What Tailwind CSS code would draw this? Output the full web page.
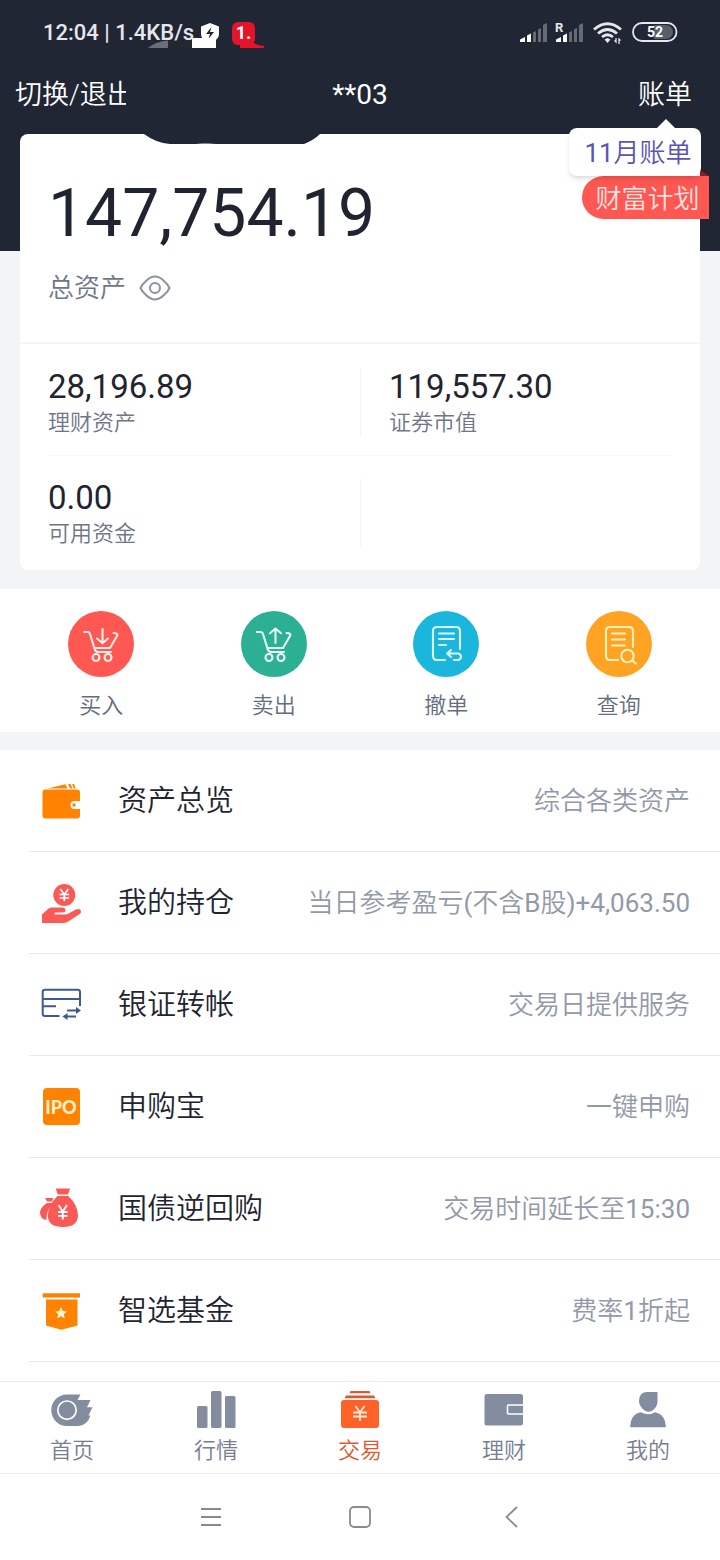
<!DOCTYPE html>
<html lang="zh-CN">
<head>
<meta charset="utf-8">
<meta name="viewport" content="width=device-width, initial-scale=1">
<title>交易</title>
<script src="https://cdn.jsdelivr.net/npm/@tailwindcss/browser@4"></script>
</head>
<body class="flex min-h-screen flex-col bg-white font-['Roboto','Noto_Sans_CJK_SC',sans-serif] font-normal text-[#1f2430]">

<div class="relative bg-[#f3f4f6] pb-[19px]">
  <header class="bg-[#212634] pb-[117px] text-white">
    <div class="relative flex h-[66px] items-center justify-between pr-[42px] pl-[43px]">
      <div class="flex items-center text-[#e6e7ea]">
        <span class="w-[150px] text-[22px] leading-8 font-medium whitespace-nowrap">12:04 | 1.4KB/s</span>
        <svg class="ml-2 h-5 w-[18px]" viewBox="0 0 18 20" aria-hidden="true"><path d="M9 0 18 3.500V11q0 6-9 9Q0 17 0 11V3.500Z" fill="#fff"/><path d="M10.500 4 5 11h4l-1.500 5L13 9H9Z" fill="#212634"/></svg>
        <span class="ml-[13px] flex h-[23px] w-[23px] items-center justify-center rounded-md bg-[#e5142b] text-[18px] leading-5 font-bold text-white">1.</span>
      </div>
      <svg class="absolute top-[38px] left-[148px] h-[10px] w-[116px]" viewBox="0 0 116 10" aria-hidden="true"><path d="M0 10Q8 3 20 2.500V10Z" fill="#6b6e78"/><path d="M20 2.500h24V10H20Z" fill="#25272e"/><path d="M44 0h24v10H44Z" fill="#fff"/><path d="M92 2h10q4 5 14 6v2H92Z" fill="#e5142b"/></svg>
      <svg class="h-6 w-[158px]" viewBox="0 0 158 24" aria-hidden="true">
        <g fill="#fff"><path d="M0 18.500 5 16v5H0ZM7 14.500l4-2V21H7Z"/><path d="M36 18.500 41 16v5h-5ZM43 14.500l4-2V21h-4Z"/></g>
        <g fill="#666a75"><path d="m13 11.500 3-1.500v11h-3ZM18 8.500 21 7v14h-3ZM23 4 27 2v19h-4ZM49 11.500l3-1.500v11h-3ZM54 8.500 57 7v14h-3ZM59 4 63 2v19h-4Z"/></g>
        <text x="35" y="11" font-family="Roboto" font-size="13" font-weight="700" fill="#e6e7ea">R</text>
        <g fill="none" stroke="#e6e7ea" stroke-width="2.800"><path d="M74 8.500Q87.500-3 101 8.500"/><path d="M78 12.500q9.500-8 19 0"/><path d="M82 16q5.500-4.500 11 0"/></g>
        <path d="m84.500 18.500 3-1.500 3 1.500-3 3.500Z" fill="#e6e7ea"/>
        <path d="M96 17v4l-1.500-1.500M99 23v-5l1.500 1.500" stroke="#e6e7ea" stroke-width="1.300" fill="none"/>
        <rect x="113" y="2" width="43.500" height="18" rx="9" fill="none" stroke="#e6e7ea" stroke-width="1.800"/>
        <path d="M134 4h12a7 7 0 0 1 0 14h-12Z" fill="#595e6b"/>
        <text x="135" y="16" font-family="Roboto" font-size="14" font-weight="700" fill="#fff" text-anchor="middle">52</text>
      </svg>
    </div>
    <div class="grid h-[68px] grid-cols-3 items-center px-[15px] pb-[10px] text-[27px] leading-9">
      <button type="button" class="relative justify-self-start font-[350] whitespace-nowrap">切换/退出<span class="absolute inset-y-0 left-[111px] w-3 bg-[#212634]"></span></button>
      <h1 class="text-center text-[28px]">**03</h1>
      <button type="button" class="pr-[13px] text-right font-[350]">账单</button>
    </div>
  </header>

  <main class="mx-5 -mt-[117px] rounded-lg bg-white">
    <section class="border-b-2 border-[#f3f4f6] px-7 pt-10 pb-[36px]">
      <div class="text-[66px] leading-[80px]">147,754.19</div>
      <div class="mt-4 flex items-center gap-[13px] text-[#6e7687]">
        <span class="text-[26px] leading-9 font-[350]">总资产</span>
        <button type="button" aria-label="显示或隐藏资产"><svg class="h-[26px] w-8" viewBox="0 0 32 26" fill="none" stroke="#8b91a0" stroke-width="2" aria-hidden="true"><path d="M1.500 13Q3 9.500 7 6q9-9 18 0 4 3.500 5.500 7-1.500 3.500-5.500 7-9 9-18 0-4-3.500-5.500-7Z"/><circle cx="16" cy="13" r="5"/></svg></button>
      </div>
    </section>
    <section class="px-7">
      <div class="grid grid-cols-2 border-b border-[#f5f6f8] pt-6 pb-[19px]">
        <div class="h-[68px]"><div class="-mt-[3px] text-[33px] leading-[44px]">28,196.89</div><div class="text-[22px] leading-7 font-[350] text-[#6e7687]">理财资产</div></div>
        <div class="h-[68px] border-l border-[#f3f4f6] pl-7"><div class="-mt-[3px] text-[33px] leading-[44px]">119,557.30</div><div class="text-[22px] leading-7 font-[350] text-[#6e7687]">证券市值</div></div>
      </div>
      <div class="grid grid-cols-2 pt-[23px] pb-[23px]">
        <div class="h-[68px]"><div class="-mt-[3px] text-[33px] leading-[44px]">0.00</div><div class="text-[22px] leading-7 font-[350] text-[#6e7687]">可用资金</div></div>
        <div class="h-[68px] border-l border-[#f3f4f6]"></div>
      </div>
    </section>
  </main>

  <!-- dark curve that dips over the card's top edge -->
  <svg class="absolute top-[134px] left-[144px] h-[10px] w-[176px]" viewBox="0 0 176 10" aria-hidden="true"><path d="M0 0q12 9 26 10h134q10-4 16-10Z" fill="#212634"/><path d="M52 10q8-2 20 0Z" fill="#8b8e96"/></svg>

  <button type="button" class="absolute top-[176px] right-[11px] h-[43px] w-[127px] rounded-l-full bg-[#ff5751] pl-1 text-[26px] leading-[46px] font-[350] text-[#ffe4e0]">财富计划</button>
  <svg class="absolute top-[170px] right-[11px] h-[6px] w-[9px]" viewBox="0 0 9 6" aria-hidden="true"><path d="M0 0 9 6H0Z" fill="#8e1d22"/></svg>
  <a href="#bill" class="absolute top-[128px] right-[19px] h-12 w-[132px] rounded-lg bg-white pl-[6px] text-center text-[26px] leading-[50px] font-[350] text-[#5b54b0] shadow-md"><span class="font-normal">11</span>月账单<svg class="absolute -top-[9px] left-[87px] h-[10px] w-5" viewBox="0 0 20 10" aria-hidden="true"><path d="M0 10 10 0l10 10Z" fill="#fff"/></svg></a>
</div>

<nav class="grid grid-cols-4 bg-white px-[15px] pt-[22px] pb-[10px] text-[22px] leading-8 font-[350] text-[#636c80]" aria-label="交易操作">
  <button type="button" class="flex flex-col items-center gap-[13px]"><svg class="h-[66px] w-[66px]" viewBox="0 0 66 66" fill="none" stroke="#ffecea" stroke-width="2.100" stroke-linecap="round" stroke-linejoin="round" aria-hidden="true"><circle cx="33" cy="33" r="33" fill="#ff5751" stroke="none"/><path d="M16 21h3.500q2 0 2.500 2l4.500 14.500q.800 3.500 3.500 3.500h13M26.500 37H42l7.300-12.500q.700-2.500-3.800-2.500M34.500 18v14M29 27.500l5.500 4.800 5.500-4.800"/><circle cx="28" cy="46.500" r="3.500"/><circle cx="40" cy="46.500" r="3.500"/></svg>买入</button>
  <button type="button" class="flex flex-col items-center gap-[13px]"><svg class="h-[66px] w-[66px]" viewBox="0 0 66 66" fill="none" stroke="#e8fbf5" stroke-width="2.100" stroke-linecap="round" stroke-linejoin="round" aria-hidden="true"><circle cx="33" cy="33" r="33" fill="#2bb094" stroke="none"/><path d="M16 21h3.500q2 0 2.500 2l4.500 14.500q.800 3.500 3.500 3.500h13M26.500 37H42l7.300-12.500q.700-2.500-3.800-2.500M34.500 32V17.500M29 22.300l5.500-4.800 5.500 4.800"/><circle cx="28" cy="46.500" r="3.500"/><circle cx="40" cy="46.500" r="3.500"/></svg>卖出</button>
  <button type="button" class="flex flex-col items-center gap-[13px]"><svg class="h-[66px] w-[66px]" viewBox="0 0 66 66" fill="none" stroke="#dcfaff" stroke-width="2.100" stroke-linecap="round" stroke-linejoin="round" aria-hidden="true"><circle cx="33" cy="33" r="33" fill="#1bb6dc" stroke="none"/><path d="M47 38V20q0-4-4-4H24q-4 0-4 4v25q0 4 4 4h8M26 22.500h15M26 28h15M26 34h7M38 39l-4 3.500 4 3.500M34.500 42.500H45q3 .500 3 3.200T45 49h-4"/></svg>撤单</button>
  <button type="button" class="flex flex-col items-center gap-[13px]"><svg class="h-[66px] w-[66px]" viewBox="0 0 66 66" fill="none" stroke="#fff2bf" stroke-width="2.100" stroke-linecap="round" stroke-linejoin="round" aria-hidden="true"><circle cx="33" cy="33" r="33" fill="#ffa322" stroke="none"/><path d="M47 36V20q0-4-4-4H24q-4 0-4 4v25q0 4 4 4h8M26 22.500h13M26 28.500h13M26 34.500h13M46 49.500l4 3"/><circle cx="41.500" cy="45" r="6.200"/></svg>查询</button>
</nav>
<div class="h-[18px] bg-[#f3f4f6]"></div>

<ul class="mb-[19px] pl-[29px] text-[29px] leading-10 font-[350]">
  <li class="border-b border-[#e6e7ea]"><a href="#overview" class="flex h-[101px] items-center pr-[30px] pl-3">
    <svg class="h-10 w-10 overflow-visible" viewBox="0 0 40 40" aria-hidden="true"><path d="M4.500 8.500H36q3 0 3 3V20h-5.500a4 4 0 0 0 0 8H39v6.500q0 3-3 3H4.500q-3 0-3-3v-23q0-3 3-3ZM6.500 7.500 24.500 3.200l2 4.300ZM27 3h2.500l2 4.500H29ZM31.200 3h2l1.500 4.500h-2Z" fill="#ff8200"/><circle cx="33" cy="24" r="1.700" fill="#ff8200"/></svg>
    <span class="ml-[37px]">资产总览</span><span class="ml-auto text-[26px] text-[#9299a8]">综合各类资产</span></a></li>
  <li class="border-b border-[#e6e7ea]"><a href="#positions" class="flex h-[101px] items-center pr-[30px] pl-3">
    <svg class="h-10 w-10 overflow-visible" viewBox="0 0 40 40" aria-hidden="true"><circle cx="23.300" cy="12" r="11" fill="#fa5a56"/><path d="m19.300 6 4 5.500 4-5.500M23.300 11.500V18M18.500 11.500h9.600M18.500 15h9.600" fill="none" stroke="#fff" stroke-width="1.700"/><path d="M1 40V31.500L7 26q1.500-1.500 3.500-1.500H21q3.500 0 3.500 2.500T21.500 29.500H14q-1 1.500 0 2h10q2 0 4-1.300l7-3.700q4-1.500 5 1.500.500 2-2 3.500L26 39.200q-1.500.800-3.500.800Z" fill="#fa5a56"/></svg>
    <span class="ml-[37px]">我的持仓</span><span class="ml-auto text-[26px] text-[#9299a8]">当日参考盈亏<span class="font-normal">(</span>不含<span class="font-normal">B</span>股<span class="font-normal">)+4,063.50</span></span></a></li>
  <li class="border-b border-[#e6e7ea]"><a href="#transfer" class="flex h-[101px] items-center pr-[30px] pl-3">
    <svg class="h-10 w-10 overflow-visible" viewBox="0 0 40 40" fill="none" stroke="#3c5a94" stroke-width="2" aria-hidden="true"><path d="M39 21V7q0-2.300-2.300-2.300H4Q1.700 4.700 1.700 7v21.700Q1.700 31 4 31h14.500M1.700 14H39M1.700 21.300H15M26 25.500h10M25 31.500h10"/><path d="m35 22 5 3.500-5 3.500ZM26.500 28l-5 3.500 5 3.500Z" fill="#3c5a94" stroke="none"/></svg>
    <span class="ml-[37px]">银证转帐</span><span class="ml-auto text-[26px] text-[#9299a8]">交易日提供服务</span></a></li>
  <li class="border-b border-[#e6e7ea]"><a href="#ipo" class="flex h-[101px] items-center pr-[30px] pl-3">
    <span class="flex h-10 w-10 items-center justify-center"><span class="flex h-[37px] w-[37px] items-center justify-center rounded-sm bg-[#ff8200] font-['Lato',sans-serif] text-[18px] leading-6 font-black text-[#fff0c8]">IPO</span></span>
    <span class="ml-[37px]">申购宝</span><span class="ml-auto text-[26px] text-[#9299a8]">一键申购</span></a></li>
  <li class="border-b border-[#e6e7ea]"><a href="#repo" class="flex h-[101px] items-center pr-[30px] pl-3">
    <svg class="h-10 w-10 overflow-visible" viewBox="0 0 40 40" fill="#fa5a56" aria-hidden="true"><path d="M4 9h8.500l-1.500 3.500H6ZM6 14h5q-6 9-5.500 17Q-1 30-1 23.500-.500 18 6 14ZM14.700-.500H29l-2 6H16.700ZM16.500 7h10.800Q37 16 37 26.500 36.500 38 22 38 7 38 6.800 26.500 7 16 16.500 7Z"/><path d="m17.500 16 4.300 6.500L26 16M21.800 22.500v8M17 23h9.500M17 26.800h9.500" fill="none" stroke="#fff" stroke-width="1.800"/></svg>
    <span class="ml-[37px]">国债逆回购</span><span class="ml-auto text-[26px] text-[#9299a8]">交易时间延长至<span class="font-normal">15:30</span></span></a></li>
  <li class="border-b border-[#e6e7ea]"><a href="#funds" class="flex h-[101px] items-center pr-[30px] pl-3">
    <svg class="h-10 w-10 overflow-visible" viewBox="0 0 40 40" aria-hidden="true"><path d="M1.700 2.300H39v4.200H1.700ZM5 8.500h31.500v26l-16 4.300L5 34.500Z" fill="#ff8200"/><path d="m20 16 1.800 4 4.200.400-3.200 2.800 1 4.300-3.800-2.300-3.800 2.300 1-4.300-3.200-2.800 4.200-.400Z" fill="#fff3d0"/></svg>
    <span class="ml-[37px]">智选基金</span><span class="ml-auto text-[26px] text-[#9299a8]">费率<span class="font-normal">1</span>折起</span></a></li>
</ul>

<footer class="mt-auto bg-white">
  <nav class="grid h-[93px] grid-cols-5 border-y border-[#ececee] pt-2 text-[22px] leading-8 font-[350] text-[#757e90]" aria-label="主导航">
    <a href="#home" class="flex flex-col items-center gap-[5px]"><svg class="h-10 w-[42px]" viewBox="0 0 42 40" aria-hidden="true"><path d="M16 4.500h13.500L26.500 10H39.500l-3.500 7.300h5.500L37.500 25.500H39.500Q36 36 27 36H16A15.700 15.700 0 0 1 16 4.500Z" fill="#848ca0"/><circle cx="16" cy="20.200" r="9.200" fill="none" stroke="#fff" stroke-width="1.700"/></svg>首页</a>
    <a href="#market" class="flex flex-col items-center gap-[5px]"><svg class="h-10 w-[42px]" viewBox="0 0 42 40" fill="#848ca0" aria-hidden="true"><rect x="2" y="16" width="10.500" height="22" rx="1.500"/><rect x="16" y="1" width="10.500" height="37" rx="1.500"/><rect x="30" y="6" width="10.500" height="32" rx="1.500"/></svg>行情</a>
    <a href="#trade" aria-current="page" class="flex flex-col items-center gap-[5px] text-[#dd5a30]"><svg class="h-10 w-[42px]" viewBox="0 0 42 40" aria-hidden="true"><path d="M11.500 1h19l1 2.300h-21ZM7 5.500h28l1.500 2.800h-31Z" fill="#dd5a30"/><rect x="2" y="10" width="38" height="28" rx="3" fill="#ff6129"/><path d="m16.500 16 4.500 6.500 4.500-6.500M21 22.500V31M14 22.500h14M14 26.500h14" fill="none" stroke="#ffe9dc" stroke-width="1.800"/></svg>交易</a>
    <a href="#wealth" class="flex flex-col items-center gap-[5px]"><svg class="h-10 w-[42px]" viewBox="0 0 42 40" aria-hidden="true"><rect x="1.500" y="4" width="38.500" height="31.500" rx="2.500" fill="#848ca0"/><path d="M40 15H25.500q-1 0-1 1v7q0 1 1 1H40" fill="none" stroke="#fff" stroke-width="1.600"/></svg>理财</a>
    <a href="#mine" class="flex flex-col items-center gap-[5px]"><svg class="h-10 w-[42px]" viewBox="0 0 42 40" fill="#848ca0" aria-hidden="true"><path d="M20.500 2H30.500V11q0 5-3.500 8.300-5.500 5-11 0Q12 15.500 12 11 12 2 20.500 2ZM14 22.300q7.500 3.800 14 0 10.500 2 10.800 14.900H3.200Q3.500 24 14 22.300Z"/></svg>我的</a>
  </nav>
  <div class="flex h-[86px] items-center justify-center gap-[126px]">
    <button type="button" aria-label="最近任务"><svg class="block h-6 w-6" viewBox="0 0 24 24" fill="none" stroke="#8a8a8a" stroke-width="1.800" aria-hidden="true"><path d="M3 4h20M3 12h20M3 20h20"/></svg></button>
    <button type="button" aria-label="主屏幕"><svg class="block h-6 w-6" viewBox="0 0 24 24" fill="none" stroke="#8a8a8a" stroke-width="1.800" aria-hidden="true"><rect x="2" y="2" width="20" height="20" rx="4"/></svg></button>
    <button type="button" aria-label="返回"><svg class="block h-6 w-6" viewBox="0 0 24 24" fill="none" stroke="#8a8a8a" stroke-width="1.800" aria-hidden="true"><path d="M19 2 8.500 12 19 22"/></svg></button>
  </div>
</footer>
</body>
</html>
